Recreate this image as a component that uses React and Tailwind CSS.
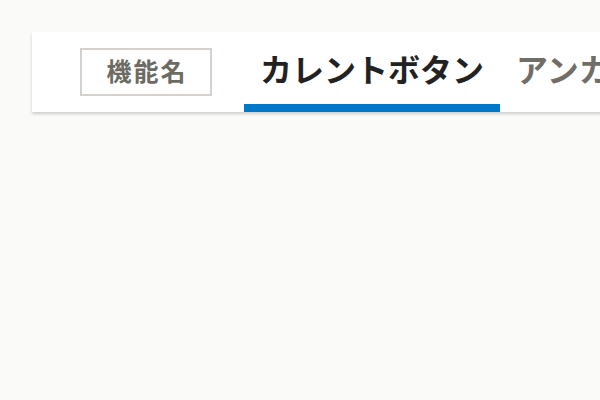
export default function App() {
  return (
    <div className="w-[600px] h-[400px] overflow-hidden bg-[#fafaf8] pt-8 pl-8" style={{ fontFamily: '"Noto Sans CJK JP", "Noto Sans", sans-serif' }}>
      <div className="flex items-stretch h-20 w-[760px] bg-white shadow-[0_2px_3px_rgba(0,0,0,0.18)] pl-12 whitespace-nowrap">
        <div className="shrink-0 self-center flex items-center justify-center w-[132px] h-12 pb-1 pl-[2px] border-2 border-[#d4d0cb] text-[25px] font-bold text-[#6b6a63] tracking-[2px] leading-none">
          機能名
        </div>
        <div className="shrink-0 ml-8 flex items-center px-4 border-b-8 border-[#0077c8] text-[32px] font-bold text-[#222222] leading-none">
          カレントボタン
        </div>
        <div className="shrink-0 flex items-center px-4 border-b-8 border-transparent text-[32px] font-bold text-[#706e68] leading-none">
          アンカーリンク
        </div>
      </div>
    </div>
  );
}
